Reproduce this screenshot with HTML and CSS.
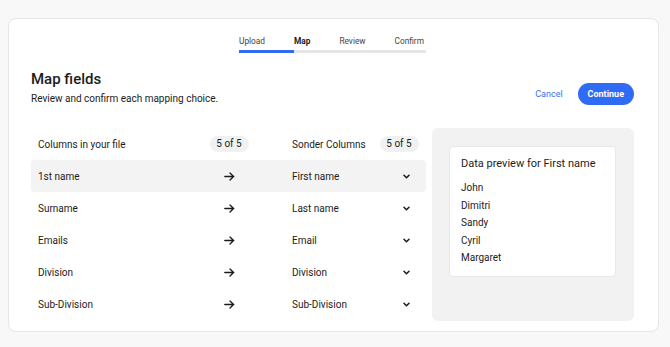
FILE: index.html
```html
<!DOCTYPE html>
<html lang="en">
<head>
    <meta charset="UTF-8">
    <meta name="viewport" content="width=device-width, initial-scale=1.0">
    <title>Map fields</title>
    <link rel="stylesheet" href="styles.css">
</head>
<body>
    <div class="card">
        <div class="stepper">
            <div class="step done">Upload</div>
            <div class="step active">Map</div>
            <div class="step">Review</div>
            <div class="step last">Confirm</div>
        </div>

        <div class="header">
            <div class="titles">
                <h1 class="title">Map fields</h1>
                <p class="subtitle">Review and confirm each mapping choice.</p>
            </div>
            <div class="actions">
                <button class="link-btn">Cancel</button>
                <button class="primary-btn">Continue</button>
            </div>
        </div>

        <div class="main">
            <div class="mapping">
                <div class="row head">
                    <span>Columns in your file</span>
                    <span class="badge">5 of 5</span>
                    <span></span>
                    <span>Sonder Columns</span>
                    <span class="badge">5 of 5</span>
                </div>
                <div class="row selected">
                    <span>1st name</span>
                    <span class="arrow"><svg width="11" height="9" viewBox="0 0 11 9"><path d="M0.8 4.5h9M6 1l3.6 3.5L6 8" fill="none" stroke="#1a1a1a" stroke-width="1.3" stroke-linecap="round" stroke-linejoin="round"/></svg></span>
                    <span></span>
                    <span>First name</span>
                    <span class="chev"><svg width="7" height="5" viewBox="0 0 7 5"><path d="M1 1.2l2.5 2.5L6 1.2" fill="none" stroke="#1a1a1a" stroke-width="1.5" stroke-linecap="round" stroke-linejoin="round"/></svg></span>
                </div>
                <div class="row">
                    <span>Surname</span>
                    <span class="arrow"><svg width="11" height="9" viewBox="0 0 11 9"><path d="M0.8 4.5h9M6 1l3.6 3.5L6 8" fill="none" stroke="#1a1a1a" stroke-width="1.3" stroke-linecap="round" stroke-linejoin="round"/></svg></span>
                    <span></span>
                    <span>Last name</span>
                    <span class="chev"><svg width="7" height="5" viewBox="0 0 7 5"><path d="M1 1.2l2.5 2.5L6 1.2" fill="none" stroke="#1a1a1a" stroke-width="1.5" stroke-linecap="round" stroke-linejoin="round"/></svg></span>
                </div>
                <div class="row">
                    <span>Emails</span>
                    <span class="arrow"><svg width="11" height="9" viewBox="0 0 11 9"><path d="M0.8 4.5h9M6 1l3.6 3.5L6 8" fill="none" stroke="#1a1a1a" stroke-width="1.3" stroke-linecap="round" stroke-linejoin="round"/></svg></span>
                    <span></span>
                    <span>Email</span>
                    <span class="chev"><svg width="7" height="5" viewBox="0 0 7 5"><path d="M1 1.2l2.5 2.5L6 1.2" fill="none" stroke="#1a1a1a" stroke-width="1.5" stroke-linecap="round" stroke-linejoin="round"/></svg></span>
                </div>
                <div class="row">
                    <span>Division</span>
                    <span class="arrow"><svg width="11" height="9" viewBox="0 0 11 9"><path d="M0.8 4.5h9M6 1l3.6 3.5L6 8" fill="none" stroke="#1a1a1a" stroke-width="1.3" stroke-linecap="round" stroke-linejoin="round"/></svg></span>
                    <span></span>
                    <span>Division</span>
                    <span class="chev"><svg width="7" height="5" viewBox="0 0 7 5"><path d="M1 1.2l2.5 2.5L6 1.2" fill="none" stroke="#1a1a1a" stroke-width="1.5" stroke-linecap="round" stroke-linejoin="round"/></svg></span>
                </div>
                <div class="row">
                    <span>Sub-Division</span>
                    <span class="arrow"><svg width="11" height="9" viewBox="0 0 11 9"><path d="M0.8 4.5h9M6 1l3.6 3.5L6 8" fill="none" stroke="#1a1a1a" stroke-width="1.3" stroke-linecap="round" stroke-linejoin="round"/></svg></span>
                    <span></span>
                    <span>Sub-Division</span>
                    <span class="chev"><svg width="7" height="5" viewBox="0 0 7 5"><path d="M1 1.2l2.5 2.5L6 1.2" fill="none" stroke="#1a1a1a" stroke-width="1.5" stroke-linecap="round" stroke-linejoin="round"/></svg></span>
                </div>
            </div>

            <div class="preview">
                <div class="preview-card">
                    <div class="preview-title">Data preview for First name</div>
                    <ul class="preview-list">
                        <li>John</li>
                        <li>Dimitri</li>
                        <li>Sandy</li>
                        <li>Cyril</li>
                        <li>Margaret</li>
                    </ul>
                </div>
            </div>
        </div>
    </div>
</body>
</html>
```

FILE: styles.css
```css
* {
    box-sizing: border-box;
}

body {
    margin: 0;
    padding: 18px 0 0 8px;
    background-color: #f8f8f8;
    font-family: Roboto, "Liberation Sans", sans-serif;
    color: #1c1c1c;
}

.card {
    width: 651px;
    height: 314px;
    background-color: #fff;
    border: 1px solid #e6e6e6;
    border-radius: 8px;
    padding: 15px 24px 10px 22px;
}

.stepper {
    display: flex;
    justify-content: center;
}

.step {
    font-size: 8.3px;
    line-height: 14px;
    padding: 0 29px 2px 0;
    border-bottom: 3px solid #e6e6e6;
    color: #444;
}

.step.last {
    padding-right: 2px;
}

.step.done {
    border-bottom-color: #2f6bf5;
}

.step.active {
    font-weight: 700;
    color: #1c1c1c;
}

.header {
    display: flex;
    justify-content: space-between;
    align-items: flex-end;
    margin-top: 16px;
}

.title {
    margin: 0;
    font-size: 15px;
    line-height: 20px;
    font-weight: 500;
}

.subtitle {
    margin: 3px 0 0;
    font-size: 10px;
    line-height: 14px;
}

.actions {
    display: flex;
    align-items: center;
    gap: 15px;
    margin-bottom: 1px;
}

.link-btn {
    background: none;
    border: none;
    padding: 0;
    font-family: inherit;
    font-size: 9px;
    color: #3b6ff2;
    cursor: pointer;
}

.primary-btn {
    height: 22px;
    padding: 0 10px;
    border: none;
    border-radius: 11px;
    background-color: #2f6bf5;
    color: #fff;
    font-family: inherit;
    font-size: 9px;
    font-weight: 700;
    cursor: pointer;
}

.main {
    display: flex;
    gap: 6px;
    margin-top: 22px;
}

.mapping {
    width: 395px;
}

.row {
    display: grid;
    grid-template-columns: 172px 38px 44px 1fr 38px;
    align-items: center;
    height: 32px;
    padding: 0 8px 0 7px;
    font-size: 10px;
    border-radius: 4px;
}

.row.selected {
    background-color: #f3f3f3;
}

.badge {
    justify-self: center;
    width: 39px;
    height: 16px;
    line-height: 16px;
    text-align: center;
    border-radius: 8px;
    background-color: #f1f1f1;
}

.arrow {
    display: flex;
    justify-content: center;
}

.chev {
    display: flex;
    justify-content: flex-end;
    padding-right: 8px;
}

.arrow svg,
.chev svg {
    display: block;
}

.preview {
    flex: 1;
    height: 193px;
    background-color: #f2f2f2;
    border-radius: 6px;
    padding: 18px 18px 0 17px;
}

.preview-card {
    background-color: #fff;
    border: 1px solid #e8e8e8;
    border-radius: 4px;
    padding: 9px 12px 9px 11px;
}

.preview-title {
    font-size: 11px;
    line-height: 16px;
}

.preview-list {
    list-style: none;
    margin: 7px 0 0;
    padding: 0;
    font-size: 10px;
    line-height: 17.5px;
}
```
